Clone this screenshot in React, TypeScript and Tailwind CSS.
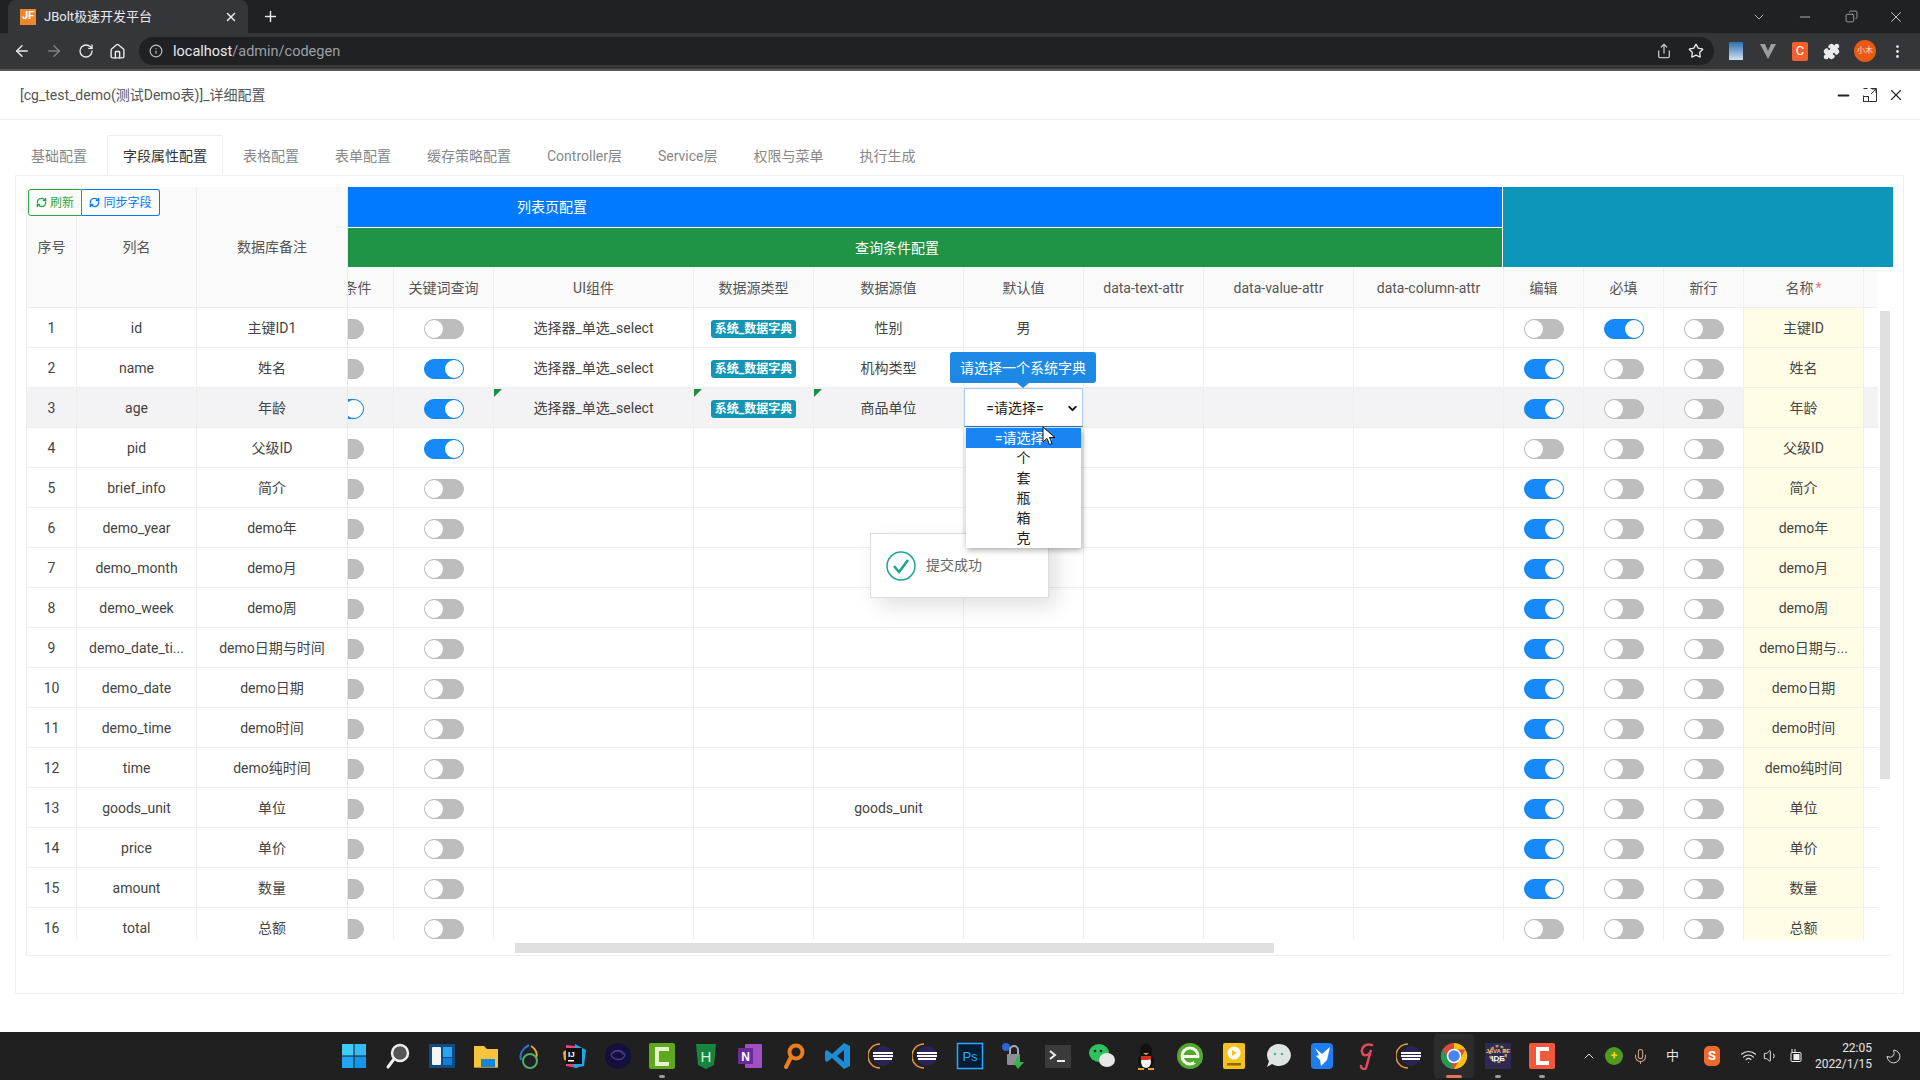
import React from 'react';
import {
  ArrowLeft, ArrowRight, RotateCw, Home, Info, Share, Star, Puzzle, MoreVertical,
  Minus, Copy, X, ChevronDown, Plus, RefreshCw, Wifi, Volume1, Mic, ChevronUp, Moon,
} from 'lucide-react';

const colW = [
  'w-[100px]', 'w-[100px]', 'w-[200px]', 'w-[120px]', 'w-[150px]', 'w-[120px]', 'w-[120px]',
  'w-[150px]', 'w-[150px]', 'w-[80px]', 'w-[80px]', 'w-[80px]', 'w-[120px]', 'w-[14px]',
];

const cell = 'relative flex shrink-0 items-center justify-center border-r border-r-[#eeeeee] pt-[2px]';
const frozen = 'flex h-full items-center justify-center border-r border-r-[#eeeeee] pt-[2px]';

const headers = ['查询条件', '关键词查询', 'UI组件', '数据源类型', '数据源值', '默认值', 'data-text-attr', 'data-value-attr', 'data-column-attr', '编辑', '必填', '新行'];

const rows = [
  ['id', '主键ID1', '主键ID'],
  ['name', '姓名', '姓名'],
  ['age', '年龄', '年龄'],
  ['pid', '父级ID', '父级ID'],
  ['brief_info', '简介', '简介'],
  ['demo_year', 'demo年', 'demo年'],
  ['demo_month', 'demo月', 'demo月'],
  ['demo_week', 'demo周', 'demo周'],
  ['demo_date_ti...', 'demo日期与时间', 'demo日期与...'],
  ['demo_date', 'demo日期', 'demo日期'],
  ['demo_time', 'demo时间', 'demo时间'],
  ['time', 'demo纯时间', 'demo纯时间'],
  ['goods_unit', '单位', '单位'],
  ['price', '单价', '单价'],
  ['amount', '数量', '数量'],
  ['total', '总额', '总额'],
];

const Toggle = ({ on }: { on?: boolean }) => (
  <span className={`flex h-[20px] w-[40px] items-center rounded-full border ${on ? 'justify-end border-[#1588e0] bg-[#1689fc]' : 'justify-start border-[#bbbbbb] bg-[#bdbdbd]'}`}>
    <span className="h-[18px] w-[18px] rounded-full bg-white" />
  </span>
);

const Badge = () => (
  <span className="rounded-[3px] bg-[#1296b5] px-[4px] text-[12px] font-bold leading-[18px] text-white">系统_数据字典</span>
);

const Corner = () => (
  <span className="absolute left-0 top-[1px] h-0 w-0 border-r-[8px] border-t-[8px] border-r-transparent border-t-[#1e8e3e]" />
);

const Tb = ({ children, mark }: { children: React.ReactNode; mark?: 'dot' | 'bar' }) => (
  <div className="relative flex h-[48px] w-[44px] shrink-0 items-center justify-center">
    {mark === 'bar' && <span className="absolute left-[2px] top-[2px] h-[44px] w-[40px] rounded-[4px] bg-[#2c2c2c]" />}
    <svg width="28" height="28" viewBox="0 0 28 28" className="relative">{children}</svg>
    {mark === 'dot' && <span className="absolute bottom-[2px] left-[19px] h-[3px] w-[6px] rounded-full bg-[#9a9a9a]" />}
    {mark === 'bar' && <span className="absolute bottom-[2px] left-[14px] h-[3px] w-[16px] rounded-full bg-[#e8735a]" />}
  </div>
);

const Eclipse = () => (
  <>
    <path d="M12 2a12 12 0 0 0 0 24" fill="none" stroke="#e09a3c" strokeWidth="1.5" />
    <circle cx="15" cy="14" r="10" fill="#2c2255" />
    <rect x="5" y="10" width="20" height="2" fill="#fff" />
    <rect x="5" y="13" width="20" height="2" fill="#fff" />
    <rect x="6" y="16" width="18" height="2" fill="#fff" />
  </>
);

const TaskIcons = () => (
  <>
    <Tb>
      <rect x="2" y="2" width="11.5" height="11.5" fill="#3fcbf6" /><rect x="14.5" y="2" width="11.5" height="11.5" fill="#35bdf3" />
      <rect x="2" y="14.5" width="11.5" height="11.5" fill="#1fa6f0" /><rect x="14.5" y="14.5" width="11.5" height="11.5" fill="#1594ea" />
    </Tb>
    <Tb>
      <circle cx="16" cy="11" r="8" fill="#555" stroke="#eee" strokeWidth="2.5" /><path d="M10 17l-6 8" stroke="#eee" strokeWidth="3" strokeLinecap="round" />
    </Tb>
    <Tb>
      <rect x="1" y="2" width="26" height="24" fill="#0f4c81" /><rect x="4" y="5" width="9" height="18" rx="1" fill="#f4f4f4" />
      <rect x="15" y="5" width="9" height="10" fill="#2ba3ee" /><rect x="15" y="16" width="9" height="7" fill="#0d7fd8" />
    </Tb>
    <Tb>
      <path d="M2 4h10l3 3h11v19H2z" fill="#f7c23c" /><rect x="9" y="17" width="14" height="8" fill="#1585d8" /><rect x="2" y="25" width="24" height="1" fill="#b38719" />
    </Tb>
    <Tb>
      <path d="M13 3C7 6 3 12 5 18" fill="none" stroke="#2f6fd6" strokeWidth="2" /><path d="M15 4c5 3 7 8 5 12" fill="none" stroke="#e8a53a" strokeWidth="2" />
      <circle cx="14" cy="19" r="7" fill="none" stroke="#4caf6a" strokeWidth="2" />
    </Tb>
    <Tb>
      <path d="M6 3l9 1 3 22-12-2z" fill="#e9417c" /><path d="M15 2l11 6-2 16-10 2z" fill="#1ea7e6" /><path d="M3 10l6-4 3 14-8-2z" fill="#f9a13a" />
      <rect x="6" y="6" width="16" height="16" fill="#111" />
      <text x="8" y="15" fill="#fff" fontSize="8" fontWeight="700" fontFamily="Liberation Sans, sans-serif">IJ</text><rect x="8" y="18" width="6" height="1.5" fill="#fff" />
    </Tb>
    <Tb>
      <circle cx="14" cy="14" r="13" fill="#15103a" /><path d="M7 13c3-6 11-6 14 0-2 6-11 6-14 0z" fill="none" stroke="#3d3a8c" strokeWidth="1.5" /><path d="M9 11c3-3 8-3 10 2" fill="none" stroke="#4d49a8" />
    </Tb>
    <Tb mark="dot">
      <rect x="1" y="1" width="26" height="26" rx="2" fill="#5fa81e" /><path d="M7 5h14v4H11v11h10v4H7z" fill="#e3f5c8" />
    </Tb>
    <Tb>
      <path d="M4 2h20l-2 21-8 4-8-4z" fill="#17853f" />
      <text x="14" y="20" textAnchor="middle" fill="#d8f5df" fontSize="15" fontFamily="Liberation Sans, sans-serif">H</text>
    </Tb>
    <Tb>
      <rect x="9" y="2" width="17" height="24" rx="1" fill="#a34fc4" /><rect x="2" y="6" width="15" height="16" fill="#6b2a9c" />
      <text x="9.5" y="19" textAnchor="middle" fill="#fff" fontSize="12" fontWeight="700" fontFamily="Liberation Sans, sans-serif">N</text>
    </Tb>
    <Tb>
      <circle cx="16" cy="10" r="6.5" fill="none" stroke="#ee7d1c" strokeWidth="4" /><path d="M11 15l-5 10" stroke="#ee7d1c" strokeWidth="4" strokeLinecap="round" />
    </Tb>
    <Tb>
      <path d="M20 1l6 3v20l-6 3L8 16l-5 4-2-1.500V9.500L3 8l5 4z" fill="#1f8ad6" /><path d="M20 8l-7 6 7 6z" fill="#202020" />
    </Tb>
    <Tb><Eclipse /></Tb>
    <Tb><Eclipse /></Tb>
    <Tb>
      <rect x="1.500" y="1.500" width="25" height="25" fill="#001d34" stroke="#31a8ff" strokeWidth="1.500" />
      <text x="14" y="19" textAnchor="middle" fill="#31a8ff" fontSize="13" fontFamily="Liberation Sans, sans-serif">Ps</text>
    </Tb>
    <Tb>
      <circle cx="6" cy="5" r="4" fill="#2b63d9" /><rect x="7" y="12" width="13" height="11" rx="1" fill="#8a8f94" /><path d="M10 12V8a4 4 0 0 1 8 0v4" fill="none" stroke="#a6abb0" strokeWidth="2" />
      <path d="M20 13v7h4l-6 7-5-7h3v-3z" fill="#35b34a" />
    </Tb>
    <Tb>
      <rect x="1" y="3" width="26" height="23" fill="#3b3b3b" /><path d="M6 9l5 4-5 4" fill="none" stroke="#eee" strokeWidth="2" /><rect x="13" y="18" width="8" height="2" fill="#eee" />
    </Tb>
    <Tb>
      <ellipse cx="11" cy="11" rx="10" ry="9" fill="#2fc15b" /><ellipse cx="19" cy="18" rx="8" ry="7" fill="#e8e8e8" /><circle cx="7" cy="9" r="1.300" fill="#125" /><circle cx="13" cy="9" r="1.300" fill="#125" />
    </Tb>
    <Tb>
      <ellipse cx="14" cy="9" rx="6" ry="7.500" fill="#111" /><ellipse cx="14" cy="19" rx="8" ry="8" fill="#111" /><ellipse cx="14" cy="20" rx="5" ry="6" fill="#f2f2f2" />
      <path d="M9 14h10v3l-3 1H9z" fill="#d6301f" /><path d="M11 11h6l-3 2z" fill="#f3b01c" /><path d="M6 26h6v2H6zM16 26h6v2h-6z" fill="#f3a01c" />
    </Tb>
    <Tb>
      <circle cx="14" cy="14" r="13" fill="#52a830" /><circle cx="14" cy="14" r="8" fill="none" stroke="#f2f9e8" strokeWidth="3" /><rect x="6" y="13" width="16" height="3" fill="#f2f9e8" />
      <rect x="18" y="16" width="8" height="5" fill="#52a830" />
    </Tb>
    <Tb>
      <rect x="3" y="1" width="22" height="26" rx="2" fill="#f6c21d" /><circle cx="14" cy="11" r="6.500" fill="#fff" /><path d="M12 8l5 3-5 3z" fill="#f6c21d" /><rect x="7" y="21" width="14" height="2.500" fill="#8a6c0a" />
    </Tb>
    <Tb>
      <path d="M14 2a12 11 0 1 1-6 20l-5 3 2-6A12 11 0 0 1 14 2z" fill="#dfe5e3" /><circle cx="11" cy="12" r="1.300" fill="#4cb58c" /><circle cx="18" cy="12" r="1.300" fill="#4cb58c" />
    </Tb>
    <Tb>
      <rect x="3" y="1" width="22" height="26" rx="4" fill="#1e7df0" /><path d="M7 6l7 6 8-7-3 13-6 6-1-6-4-4 3-1z" fill="#fff" />
    </Tb>
    <Tb>
      <path d="M20 3c-6-2-11 2-10 7s8 4 9-2l-5 18c-1 2-5 1-5-2" fill="none" stroke="#e24a5c" strokeWidth="2.500" strokeLinecap="round" />
    </Tb>
    <Tb><Eclipse /></Tb>
    <Tb mark="bar">
      <circle cx="14" cy="14" r="13" fill="#dd4b3e" /><path d="M14 1a13 13 0 0 1 11.300 6.500H14z" fill="#f4c20d" /><path d="M25.300 7.500A13 13 0 0 1 14 27l6-10z" fill="#f4c20d" />
      <path d="M14 27A13 13 0 0 1 2.700 7.500L8 17z" fill="#1e9e54" /><circle cx="14" cy="14" r="6.500" fill="#4787ed" stroke="#fff" strokeWidth="1.500" />
    </Tb>
    <Tb mark="dot">
      <rect x="1" y="1" width="26" height="26" fill="#2f2a55" /><circle cx="14" cy="12" r="8" fill="none" stroke="#b9975b" strokeWidth="2.500" strokeDasharray="3 2" />
      <text x="14" y="11" textAnchor="middle" fill="#f0c060" fontSize="6" fontWeight="700" fontFamily="Liberation Sans, sans-serif">JAVA EE</text>
      <text x="14" y="19" textAnchor="middle" fill="#fff" fontSize="8" fontWeight="700" fontFamily="Liberation Sans, sans-serif">IDE</text>
    </Tb>
    <Tb mark="dot">
      <rect x="1" y="1" width="26" height="26" rx="2" fill="#f4583a" /><path d="M8 5h13v4H12v10h9v4H8z" fill="#fff" />
    </Tb>
  </>
);

const App = () => {
  return (
    <div className="flex h-[1080px] w-[1920px] flex-col overflow-hidden bg-white font-['Roboto','Noto_Sans_CJK_SC',sans-serif] text-[14px] text-[#444]">
      {/* browser tabs */}
      <div className="flex h-[33px] shrink-0 items-end bg-[#202124] pl-[8px]">
        <div className="flex h-[33px] w-[240px] items-center rounded-t-[8px] bg-[#35363a] pl-[12px] pr-[10px] text-[13px] text-[#e8eaed]">
          <span className="flex h-[16px] w-[16px] items-center justify-center bg-[#f0862b] text-[11px] font-bold text-white">JF</span>
          <span className="ml-[8px] flex-1">JBolt极速开发平台</span>
          <X size={14} strokeWidth={2.5} />
        </div>
        <div className="ml-[14px] flex h-[33px] items-center text-[#e8eaed]"><Plus size={17} /></div>
        <div className="ml-auto flex h-[33px] items-center pr-[15px] text-[#d5d6d8]">
          <ChevronDown size={16} strokeWidth={1.2} />
          <Minus size={16} strokeWidth={1.2} className="ml-[30px]" />
          <Copy size={13} strokeWidth={1.2} className="ml-[32px] scale-x-[-1]" />
          <X size={18} strokeWidth={1.2} className="ml-[29px]" />
        </div>
      </div>
      {/* toolbar */}
      <div className="flex h-[38px] shrink-0 items-center border-b-[2px] border-b-[#55575c] bg-[#35363a] pl-[13px] text-[#e8eaed]">
        <ArrowLeft size={18} />
        <ArrowRight size={18} className="ml-[14px] text-[#7f8184]" />
        <RotateCw size={16} className="ml-[15px]" />
        <Home size={17} className="ml-[15px]" />
        <div className="ml-[13px] flex h-[28px] w-[1575px] items-center rounded-full bg-[#202124] pl-[10px] pr-[10px]">
          <Info size={14} className="text-[#bdc1c6]" />
          <span className="ml-[10px] pt-[1px] text-[14.500px]"><span className="text-[#e8eaed]">localhost</span><span className="text-[#9aa0a6]">/admin/codegen</span></span>
          <Share size={16} className="ml-auto text-[#bdc1c6]" />
          <Star size={16} className="ml-[16px]" />
        </div>
        <span className="ml-[15px] h-[18px] w-[14px] bg-gradient-to-b from-[#2a6fb0] to-[#cfe3f0]" />
        <svg width="18" height="18" viewBox="0 0 18 18" className="ml-[16px]"><path d="M1 2h5l3 7 3-7h5l-8 15z" fill="#9a9da1" /></svg>
        <span className="ml-[15px] flex h-[19px] w-[16px] items-center justify-center rounded-[2px] bg-[#f4602c] text-[13px] text-white">C</span>
        <Puzzle size={17} fill="#e8eaed" className="ml-[15px]" />
        <span className="ml-[14px] flex h-[22px] w-[22px] items-center justify-center rounded-full bg-[#ea5a14] text-[8px] text-[#ffe1cc]">小木</span>
        <MoreVertical size={17} className="ml-[13px]" />
      </div>
      {/* dialog title */}
      <div className="flex h-[49px] shrink-0 items-center border-b border-b-[#eeeeee] pl-[20px] pr-[15px] text-[#555]">
        <span className="pt-[1px]">[cg_test_demo(测试Demo表)]_详细配置</span>
        <Minus size={17} strokeWidth={2.5} className="ml-auto text-[#222]" />
        <svg width="16" height="16" viewBox="0 0 16 16" className="ml-[10px]" fill="none" stroke="#333">
          <path d="M8.500 1.500h6v13h-13v-6" /><path d="M1.500 1.500h4M9 7l5-5M10 2h4v4" /><rect x="1.500" y="9.500" width="5" height="5" />
        </svg>
        <X size={18} strokeWidth={1.5} className="ml-[9px] text-[#222]" />
      </div>
      {/* tabs */}
      <div className="mt-[15px] flex h-[40px] shrink-0 pl-[15px]">
        {['基础配置', '字段属性配置', '表格配置', '表单配置', '缓存策略配置', 'Controller层', 'Service层', '权限与菜单', '执行生成'].map((t, i) => (
          <div
            key={t}
            className={`mr-[4px] flex items-center pt-[2px] ${i === 1 ? 'rounded-t-[2px] border border-b-0 border-[#eeeeee] bg-white px-[15px] text-[#333]' : 'px-[16px] text-[#888]'}`}
          >
            {t}
          </div>
        ))}
      </div>
      {/* panel */}
      <div className="ml-[15px] h-[819px] w-[1889px] shrink-0 border border-[#efefef] pl-[10px] pt-[11px]">
        <div className="relative h-[769px] w-[1867px] border-b border-l border-[#eeeeee]">
          <div className="flex h-[753px] overflow-hidden">
            {/* frozen columns */}
            <div className="relative z-10 w-[321px] shrink-0 border-r border-r-[#e8e8e8] bg-white">
              <div className="flex h-[121px] border-b border-b-[#eeeeee] bg-[#fafafa] text-[#555]">
                <div className="flex w-[50px] items-center justify-center border-r border-r-[#eeeeee]">序号</div>
                <div className="flex w-[120px] items-center justify-center border-r border-r-[#eeeeee]">列名</div>
                <div className="flex w-[150px] items-center justify-center">数据库备注</div>
              </div>
              {rows.map((r, i) => (
                <div key={r[0]} className={`flex h-[40px] items-center border-b border-b-[#eeeeee] text-center ${i === 2 ? 'bg-[#f3f3f5]' : ''}`}>
                  <div className={`${frozen} w-[50px]`}>{i + 1}</div>
                  <div className={`${frozen} w-[120px]`}>{r[0]}</div>
                  <div className="flex h-full w-[150px] items-center justify-center pt-[2px]">{r[1]}</div>
                </div>
              ))}
            </div>
            {/* scrolling columns */}
            <div className="relative flex-1 overflow-hidden">
              <div className="flex h-[80px]">
                <div className="w-[1155px] shrink-0 border-r border-r-white">
                  <div className="flex h-[41px] items-center border-b border-b-white bg-[#007bff] pl-[169px] text-white">列表页配置</div>
                  <div className="flex h-[39px] items-center bg-[#1f9346] pl-[507px] pt-[1px] text-white">查询条件配置</div>
                </div>
                <div className="flex-1 bg-[#0b96ba]" />
              </div>
              <div className="ml-[-54px] w-[1584px]">
                <div className="flex h-[41px] w-[1584px] border-b border-b-[#eeeeee] bg-[#fafafa] text-[#555]">
                  {headers.map((h, i) => (
                    <div key={h} className={`${cell} ${colW[i]}`}>{h}</div>
                  ))}
                  <div className={`${cell} ${colW[12]}`}>名称<span className="ml-[2px] text-[#e57373]">*</span></div>
                  <div className="flex-1" />
                </div>
                {rows.map((r, i) => {
                  const keyword = i === 1 || i === 2 || i === 3;
                  const edit = i === 1 || i === 2 || (i >= 4 && i <= 14);
                  return (
                    <div key={r[0]} className={`flex h-[40px] w-[1584px] border-b border-b-[#eeeeee] ${i === 2 ? 'bg-[#f3f3f5]' : ''}`}>
                      <div className={`${cell} ${colW[0]}`}><Toggle on={i === 2} /></div>
                      <div className={`${cell} ${colW[1]}`}><Toggle on={keyword} /></div>
                      <div className={`${cell} ${colW[2]}`}>
                        {i === 2 && <Corner />}
                        {i < 3 && '选择器_单选_select'}
                      </div>
                      <div className={`${cell} ${colW[3]}`}>
                        {i === 2 && <Corner />}
                        {i < 3 && <Badge />}
                      </div>
                      <div className={`${cell} ${colW[4]}`}>
                        {i === 2 && <Corner />}
                        {['性别', '机构类型', '商品单位'][i]}
                        {i === 12 && 'goods_unit'}
                      </div>
                      <div className={`${cell} ${colW[5]}`}>{i === 0 && '男'}</div>
                      <div className={`${cell} ${colW[6]}`} />
                      <div className={`${cell} ${colW[7]}`} />
                      <div className={`${cell} ${colW[8]}`} />
                      <div className={`${cell} ${colW[9]}`}><Toggle on={edit} /></div>
                      <div className={`${cell} ${colW[10]}`}><Toggle on={i === 0} /></div>
                      <div className={`${cell} ${colW[11]}`}><Toggle /></div>
                      <div className={`${cell} bg-[#fffde6] ${colW[12]}`}>{r[2]}</div>
                      <div className="flex-1" />
                    </div>
                  );
                })}
              </div>
            </div>
          </div>
          {/* horizontal scrollbar */}
          <div className="mt-[3px] h-[10px] pl-[488px]">
            <div className="h-full w-[759px] bg-[#e0e0e0]" />
          </div>
          {/* vertical scrollbar */}
          <div className="absolute left-[1853px] top-[124px] h-[468px] w-[10px] bg-[#e0e0e0]" />
          {/* toolbar buttons on the frozen header */}
          <div className="absolute left-[1px] top-[2px] z-20 flex h-[27px] text-[12px]">
            <button className="flex w-[54px] items-center justify-center gap-[3px] rounded-l-[3px] border border-[#28a745] bg-white text-[#28a745]">
              <RefreshCw size={11} strokeWidth={3} />刷新
            </button>
            <button className="flex w-[78px] items-center justify-center gap-[3px] rounded-r-[3px] border border-l-0 border-[#007bff] bg-white text-[#007bff]">
              <RefreshCw size={11} strokeWidth={3} />同步字段
            </button>
          </div>
          {/* toast */}
          <div className="absolute left-[843px] top-[346px] z-20 flex h-[65px] w-[179px] items-center border border-[#dddddd] bg-white pl-[15px] text-[#666] shadow-[8px_8px_20px_rgba(0,0,0,0.12)]">
            <svg width="30" height="30" viewBox="0 0 30 30" fill="none">
              <circle cx="15" cy="15" r="14" stroke="#1fa58f" strokeWidth="1.500" />
              <path d="M8 15l5 6 9-12" stroke="#18a689" strokeWidth="2.500" />
            </svg>
            <span className="ml-[10px]">提交成功</span>
          </div>
          {/* default value tooltip */}
          <div className="absolute left-[923px] top-[165px] z-30 flex h-[31px] w-[146px] items-center justify-center rounded-[3px] bg-[#1e88e5] pt-[1px] text-white">
            请选择一个系统字典
            <span className="absolute left-[67px] top-[31px] h-0 w-0 border-x-[6px] border-t-[5px] border-x-transparent border-t-[#1e88e5]" />
          </div>
          {/* cell select */}
          <div className="absolute left-[937px] top-[201px] z-30 flex h-[39px] w-[119px] items-center border border-[#a9cdf2] border-b-[#1976d2] bg-white pl-[10px] pt-[2px] text-[#222]">
            <span className="w-[80px] text-center">=请选择=</span>
            <ChevronDown size={13} strokeWidth={3.5} className="ml-[11px] text-[#111]" />
          </div>
          {/* open option list */}
          <div className="absolute left-[939px] top-[241px] z-30 w-[115px] bg-white text-center leading-[20px] text-[#222] shadow-[1px_2px_6px_rgba(0,0,0,0.35)]">
            <div className="bg-[#1a84f2] text-white">=请选择=</div>
            <div>个</div>
            <div>套</div>
            <div>瓶</div>
            <div>箱</div>
            <div>克</div>
          </div>
          {/* pointer */}
          <svg width="14" height="21" viewBox="0 0 14 21" className="absolute left-[1015px] top-[239px] z-40">
            <path d="M1 1v15l4-3.500 2.500 6 2.500-1-2.500-6H13z" fill="#fff" stroke="#111" />
          </svg>
        </div>
      </div>
      <div className="flex-1" />
      {/* taskbar */}
      <div className="flex h-[48px] shrink-0 items-center bg-[#202020] pl-[332px] text-white">
        <TaskIcons />
        <div className="ml-[17px] flex items-center text-[#e6e6e6]">
          <ChevronUp size={16} strokeWidth={1.5} />
          <span className="ml-[8px] flex h-[18px] w-[18px] items-center justify-center rounded-full bg-[#4f9a1f] text-[12px] font-bold text-[#f5d90a]">+</span>
          <Mic size={17} strokeWidth={1.5} className="ml-[9px] text-[#c9a27f]" />
          <span className="ml-[17px] text-[13px]">中</span>
          <span className="ml-[25px] flex h-[20px] w-[16px] items-center justify-center rounded-[5px] bg-[#ee6a2c] text-[13px] font-bold text-white">S</span>
          <Wifi size={17} strokeWidth={1.5} className="ml-[20px]" />
          <Volume1 size={16} strokeWidth={1.5} className="ml-[6px]" />
          <svg width="16" height="16" viewBox="0 0 16 16" className="ml-[9px]" fill="none" stroke="#eee">
            <rect x="3" y="4.500" width="10" height="9" rx="1" /><rect x="6" y="6.500" width="5" height="5" fill="#eee" /><path d="M4 1v3M7 1v3" />
          </svg>
          <div className="ml-[10px] w-[58px] text-right text-[12px] leading-[16px]">
            <div>22:05</div>
            <div>2022/1/15</div>
          </div>
          <Moon size={17} strokeWidth={1.3} className="ml-[13px] scale-x-[-1]" />
        </div>
      </div>
    </div>
  );
};

export default App;
